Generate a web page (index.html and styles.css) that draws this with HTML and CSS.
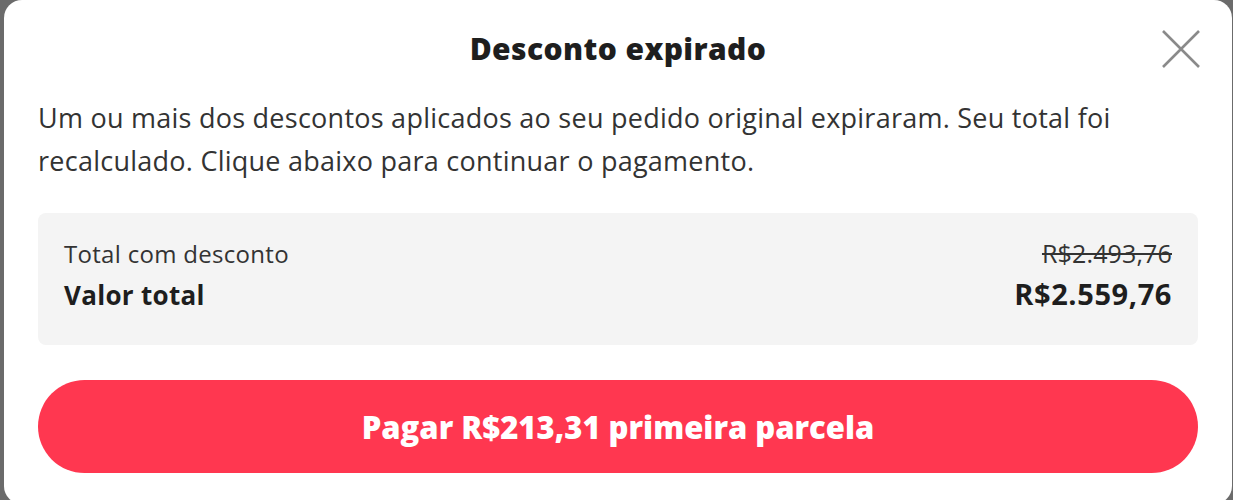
FILE: index.html
```html
<!DOCTYPE html>
<html lang="pt-BR">
<head>
    <meta charset="UTF-8">
    <meta name="viewport" content="width=device-width, initial-scale=1.0">
    <title>Desconto expirado</title>
    <link rel="stylesheet" href="styles.css">
</head>
<body>
    <div class="modal">
        <div class="modal-header">
            <h2>Desconto expirado</h2>
            <span class="close">
                <svg width="40" height="40" viewBox="0 0 40 40">
                    <path d="M2 2 L38 38 M38 2 L2 38" stroke="#8a8a8a" stroke-width="2.6" fill="none"/>
                </svg>
            </span>
        </div>
        <p class="message">Um ou mais dos descontos aplicados ao seu pedido original expiraram. Seu total foi recalculado. Clique abaixo para continuar o pagamento.</p>
        <div class="summary">
            <div class="row">
                <span class="label">Total com desconto</span>
                <span class="old-price">R$2.493,76</span>
            </div>
            <div class="row">
                <span class="label strong">Valor total</span>
                <span class="price">R$2.559,76</span>
            </div>
        </div>
        <button class="pay">Pagar R$213,31 primeira parcela</button>
    </div>
</body>
</html>
```
FILE: styles.css
```css
html, body {
    margin: 0;
    height: 100%;
    overflow: hidden;
}
body {
    background-color: #6b6b6b;
    font-family: "Open Sans", Lato, sans-serif;
    color: #2b2b2b;
}
.modal {
    background-color: #fff;
    margin-left: 4px;
    width: 1228px;
    height: 504px;
    border-radius: 18px;
    padding: 0 34px;
    box-sizing: border-box;
}
.modal-header {
    position: relative;
    height: 96px;
    display: flex;
    align-items: center;
    justify-content: center;
}
.modal-header h2 {
    margin: 0;
    font-size: 30px;
    font-weight: 800;
    letter-spacing: 0.4px;
    color: #1e1e1e;
}
.close {
    position: absolute;
    right: -3px;
    top: 29px;
    display: flex;
}
.message {
    margin: 0;
    font-size: 27px;
    line-height: 43px;
    letter-spacing: 0.25px;
    color: #333;
}
.summary {
    margin-top: 31px;
    background-color: #f4f4f4;
    border-radius: 8px;
    padding: 23px 26px 0;
    height: 132px;
    box-sizing: border-box;
}
.row {
    display: flex;
    justify-content: space-between;
    align-items: baseline;
}
.label {
    font-size: 24px;
    line-height: 34px;
    letter-spacing: 0.3px;
    color: #333;
}
.label.strong {
    font-size: 26px;
    font-weight: 700;
    letter-spacing: 0.3px;
    color: #1e1e1e;
    line-height: 48px;
}
.old-price {
    font-size: 25px;
    letter-spacing: 0.15px;
    color: #333;
    text-decoration: line-through;
}
.price {
    font-size: 29px;
    font-weight: 700;
    letter-spacing: 0.6px;
    color: #1e1e1e;
}
.pay {
    display: block;
    width: 100%;
    margin-top: 35px;
    height: 93px;
    border: none;
    border-radius: 47px;
    background-color: #ff3750;
    color: #fff;
    font-family: inherit;
    font-size: 31px;
    font-weight: 800;
}
```
